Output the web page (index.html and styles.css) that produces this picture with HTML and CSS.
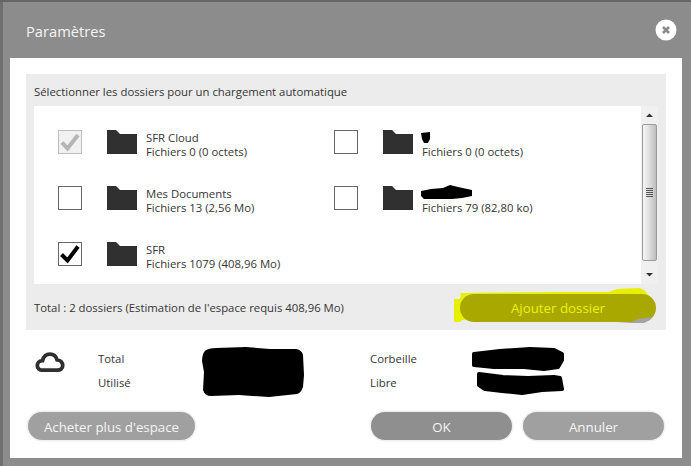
FILE: index.html
```html
<!DOCTYPE html>
<html lang="fr">
<head>
<meta charset="utf-8">
<title>Paramètres</title>
<link rel="stylesheet" href="styles.css">
</head>
<body>
<div class="topline"></div>
<div class="dialog">
  <header class="titlebar">
    <h1 class="title">Paramètres</h1>
    <button class="close" aria-label="Fermer">
      <svg width="22" height="22" viewBox="0 0 22 22"><circle cx="11" cy="11" r="10.500" fill="#fff"/><path d="M8 8l6 6M14 8l-6 6" stroke="#8a8a8a" stroke-width="2.600"/></svg>
    </button>
  </header>
  <main class="sheet">
    <section class="panel">
      <div class="panel-head">Sélectionner les dossiers pour un chargement automatique</div>
      <div class="listbox">
        <div class="list">
          <div class="item">
            <span class="check disabled"><svg width="24" height="24" viewBox="0 0 24 24"><path d="M4 12.500l5.500 6L20 5" fill="none" stroke="#b5b5b5" stroke-width="4"/></svg></span>
            <svg class="folder" width="30" height="24" viewBox="0 0 30 24"><path d="M0 0h9l4 4h17v20H0z" fill="#303030"/></svg>
            <div class="meta"><div class="name">SFR Cloud</div><div>Fichiers 0 (0 octets)</div></div>
          </div>
          <div class="item">
            <span class="check"></span>
            <svg class="folder" width="30" height="24" viewBox="0 0 30 24"><path d="M0 0h9l4 4h17v20H0z" fill="#303030"/></svg>
            <div class="meta">
              <div class="name"><svg class="scribble" width="9" height="11" viewBox="0 0 9 11"><path d="M0 1l9-1v7l-2 4H3L1 7z" fill="#000"/></svg></div>
              <div>Fichiers 0 (0 octets)</div>
            </div>
          </div>
          <div class="item">
            <span class="check"></span>
            <svg class="folder" width="30" height="24" viewBox="0 0 30 24"><path d="M0 0h9l4 4h17v20H0z" fill="#303030"/></svg>
            <div class="meta"><div class="name">Mes Documents</div><div>Fichiers 13 (2,56 Mo)</div></div>
          </div>
          <div class="item">
            <span class="check"></span>
            <svg class="folder" width="30" height="24" viewBox="0 0 30 24"><path d="M0 0h9l4 4h17v20H0z" fill="#303030"/></svg>
            <div class="meta">
              <div class="name"><svg class="scribble" width="51" height="14" viewBox="0 0 51 14"><path d="M0 6l10-2 12-1 7-3 8 2 14 3v6l-10 2-10 1H3l-3-3z" fill="#000"/></svg></div>
              <div>Fichiers 79 (82,80 ko)</div>
            </div>
          </div>
          <div class="item">
            <span class="check"><svg width="24" height="24" viewBox="0 0 24 24"><path d="M3.500 12.500l6 6L20 4.500" fill="none" stroke="#000" stroke-width="4"/></svg></span>
            <svg class="folder" width="30" height="24" viewBox="0 0 30 24"><path d="M0 0h9l4 4h17v20H0z" fill="#303030"/></svg>
            <div class="meta"><div class="name">SFR</div><div>Fichiers 1079 (408,96 Mo)</div></div>
          </div>
        </div>
        <div class="scrollbar">
          <svg width="17" height="18" viewBox="0 0 17 18"><path d="M5 11l3.500-3.500L12 11z" fill="#333"/></svg>
          <div class="thumb"><span class="grip"></span></div>
          <svg class="arrow-down" width="17" height="16" viewBox="0 0 17 16"><path d="M5 5l3.500 3.500L12 5z" fill="#333"/></svg>
        </div>
      </div>
      <div class="panel-foot">
        <span>Total : 2 dossiers (Estimation de l'espace requis 408,96 Mo)</span>
        <div class="add-wrap">
          <svg class="marker" width="202" height="36" viewBox="0 0 202 36"><path d="M6 11L7 5l100-1 48 0 8-3 22-1 5 2 7 8 1 18-190 4-2 2H0V11z" fill="#e6f000"/></svg>
          <button class="btn add">Ajouter dossier</button>
          <svg class="corner" width="40" height="6" viewBox="0 0 40 6"><path d="M0 6l16-1 6-3 8-1 6-1-2 3-6 3z" fill="#a3a3a3"/></svg>
        </div>
      </div>
    </section>
    <section class="quota">
      <svg class="cloud" width="30" height="20" viewBox="0 0 30 20"><path d="M8 18.200C4 18.200 2.300 16 2.300 13.500 2.300 10.700 4.500 8.700 7.500 8.700 8.500 4.700 11.500 2.200 15 2.200 18.500 2.200 21 4.200 22 7.800 25.300 8 27.700 10.500 27.700 13.500 27.700 16.500 25.500 18.200 22.500 18.200z" fill="none" stroke="#2f2f2f" stroke-width="3.800"/></svg>
      <div class="stats">
        <div class="stat">
          <div>Total</div><div>Utilisé</div>
          <svg class="mask mask-a" width="102" height="50" viewBox="0 0 102 50"><path d="M4 3Q8 1 14 1l30-1 24 2 26 0q6 1 7 6l1 20-1 12q-2 6-6 7l-28 3-30-2-28 1q-6 0-8-6L2 25 0 14Q0 6 4 3z" fill="#000"/></svg>
        </div>
        <div class="stat">
          <div>Corbeille</div><div>Libre</div>
          <svg class="mask mask-b" width="100" height="50" viewBox="0 0 100 50"><path d="M2 7l26-3 30-2 24 1 8 4v6l-4 7-14 2-20-2H22L2 18zM7 27l24 3 25 1 26-1 6 1 2 11-20 1-20 3-20-2-17-2-6-4z" fill="#000" stroke="#000" stroke-width="4" stroke-linejoin="round"/></svg>
        </div>
      </div>
    </section>
    <footer class="actions">
      <button class="btn buy">Acheter plus d'espace</button>
      <div class="confirm">
        <button class="btn ok">OK</button>
        <button class="btn cancel">Annuler</button>
      </div>
    </footer>
  </main>
</div>
</body>
</html>
```
FILE: styles.css
```css
* { box-sizing: border-box; }
html, body { margin: 0; height: 100%; }
body {
  width: 691px;
  height: 466px;
  overflow: hidden;
  background: #6f6f6f;
  font-family: "Open Sans", "Noto Sans", sans-serif;
  font-size: 11.35px;
  color: #353535;
  display: flex;
  flex-direction: column;
}
.topline { height: 2px; background: #666; }
.dialog {
  flex: 1;
  margin: 0 0 0 3px;
  background: #8c8c8c;
  padding: 0 9px 8px 7px;
  display: flex;
  flex-direction: column;
}
.titlebar {
  height: 56px;
  display: flex;
  align-items: center;
  justify-content: space-between;
  padding: 0 5px 0 16px;
}
.title { margin: 2px 0 0; font-size: 14.700px; font-weight: 400; color: #f4f4f4; }
.close { border: 0; padding: 0; background: none; display: flex; margin-top: 0; }
.sheet {
  flex: 1;
  background: #fff;
  padding: 16px 16px 0;
  display: flex;
  flex-direction: column;
}
.panel { height: 256px; background: #ececec; padding: 0 8px; display: flex; flex-direction: column; }
.panel-head { height: 32px; display: flex; align-items: center; padding-top: 2px; }
.listbox { height: 178px; background: #fff; display: flex; justify-content: space-between; }
.list {
  padding: 24px 0 0 24px;
  display: grid;
  grid-template-columns: 276px 240px;
  grid-auto-rows: 56px;
  align-content: start;
}
.item { display: flex; align-items: flex-start; }
.check { width: 24px; height: 24px; border: 1px solid #666; background: #fff; flex: none; position: relative; }
.check svg { position: absolute; left: -1px; top: -1px; }
.check.disabled { border-color: #bdbdbd; background: #f1f1f1; }
.folder { margin-left: 25px; flex: none; }
.meta { margin-left: 9px; line-height: 14px; padding-top: 1px; white-space: nowrap; }
.name { height: 14px; position: relative; }
.scribble { position: absolute; left: -1px; bottom: 2px; }
.scrollbar {
  width: 17px;
  background: #f0f0f0;
  display: flex;
  flex-direction: column;
  align-items: center;
}
.scrollbar svg { display: block; flex: none; }
.arrow-down { margin-top: auto; }
.thumb {
  width: 15px;
  height: 137px;
  flex: none;
  border: 1px solid #9a9a9a;
  border-radius: 2px;
  background: linear-gradient(90deg, #f6f6f6, #e2e2e2 40%, #bdbdbd);
  display: flex;
  align-items: center;
  justify-content: center;
}
.grip {
  width: 7px;
  height: 9px;
  background: repeating-linear-gradient(#555 0 1px, transparent 1px 2px);
}
.panel-foot { flex: 1; display: flex; align-items: center; justify-content: space-between; margin-right: 2px; white-space: nowrap; }
.add-wrap { position: relative; margin-top: 1px; }
.marker { position: absolute; left: -6px; top: -6px; }
.corner { position: absolute; right: 0; bottom: -1px; }
.btn {
  position: relative;
  height: 28px;
  border: 0;
  border-radius: 14px;
  background: #a0a0a0;
  color: #f5f5f5;
  font: 13.300px "Open Sans", "Noto Sans", sans-serif;
  padding: 1px 0 0;
  box-shadow: 0 0 0 1.5px #f0f0f0;
}
.add { width: 196px; background: #a8a800; color: #eef200; box-shadow: none; display: block; }
.quota { height: 82px; display: flex; align-items: flex-start; }
.cloud { margin: 22px 0 0 9px; flex: none; }
.stats { display: flex; margin-left: 33px; padding-top: 17px; }
.stat { width: 272px; position: relative; line-height: 24px; }
.mask { position: absolute; }
.mask-a { left: 104px; top: 0; }
.mask-b { left: 102px; top: 0; }
.actions { display: flex; justify-content: space-between; padding: 0 2px; }
.buy { width: 167px; }
.confirm { display: flex; gap: 11px; }
.ok { width: 141px; background: #8f8f8f; }
.cancel { width: 141px; }
```
